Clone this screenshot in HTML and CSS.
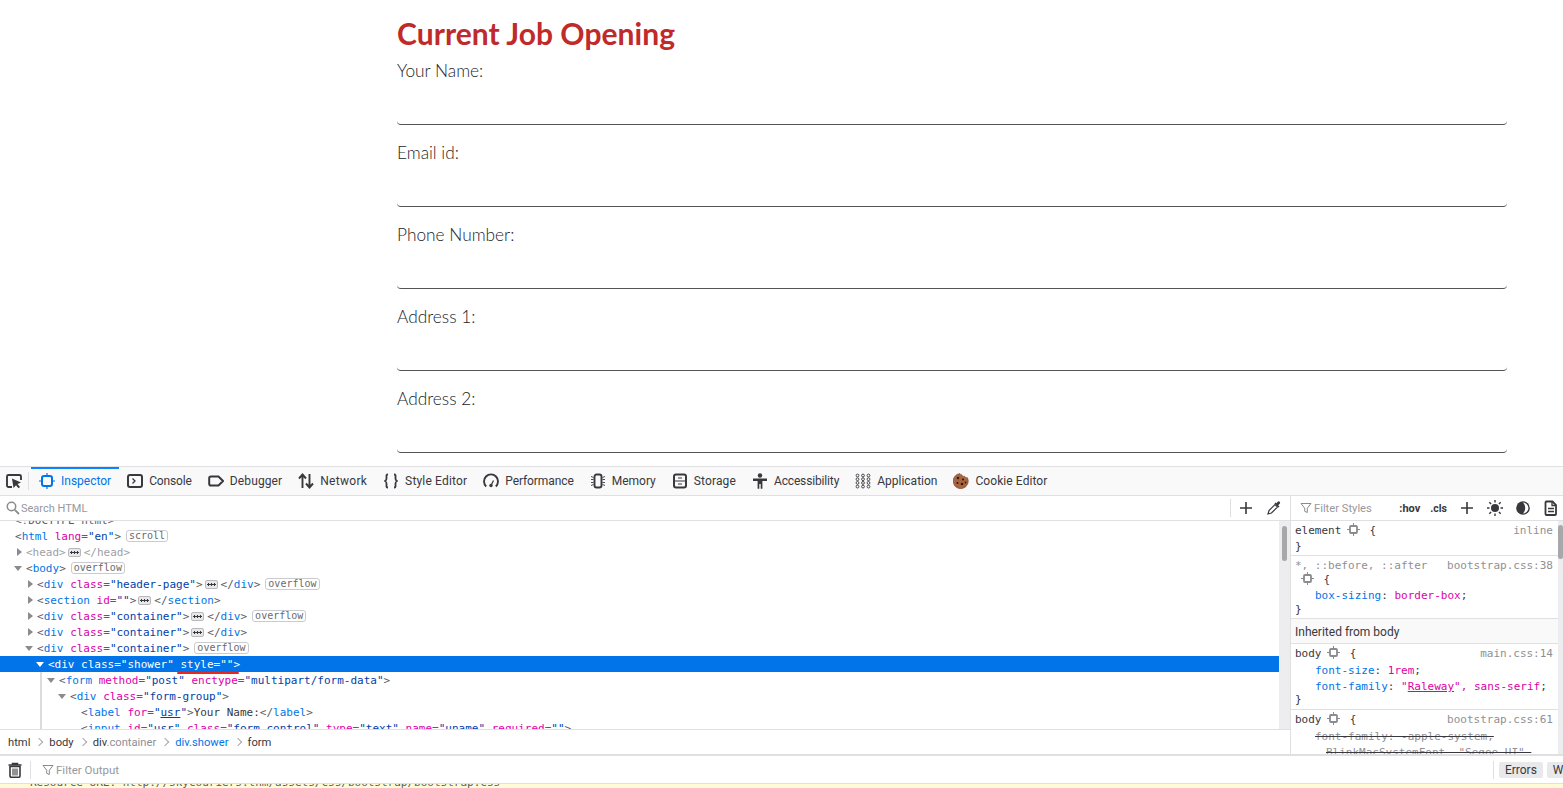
FILE: index.html
```html
<!DOCTYPE html>
<html lang="en">
<head>
<meta charset="utf-8">
<title>Current Job Opening</title>
<link rel="stylesheet" href="styles.css">
</head>
<body>
<main class="page">
  <h2 class="title">Current Job Opening</h2>
  <div class="group"><label class="lbl">Your Name:</label><div class="field"></div></div>
  <div class="group"><label class="lbl">Email id:</label><div class="field"></div></div>
  <div class="group"><label class="lbl">Phone Number:</label><div class="field"></div></div>
  <div class="group"><label class="lbl">Address 1:</label><div class="field"></div></div>
  <div class="group"><label class="lbl">Address 2:</label><div class="field"></div></div>
</main>
<section class="devtools">
  <nav class="tabs">
    <span class="pick"><svg width="16" height="16" viewBox="0 0 16 16" class="ic"><path d="M6 14H2.500A1.500 1.500 0 0 1 1 12.500v-9A1.500 1.500 0 0 1 2.500 2h11A1.500 1.500 0 0 1 15 3.500V7" fill="none" stroke="#38383d" stroke-width="1.900"/><path d="M6 5.500l9 4-3.500 1.500 2.500 3-1.500 1.300-2.500-3L7.500 15z" fill="#38383d"/></svg></span>
    <a class="tab on"><svg width="16" height="16" viewBox="0 0 16 16"><rect x="3" y="3" width="10" height="10" rx="2" fill="none" stroke="#0074e8" stroke-width="2"/><path d="M8 0v3M8 13v3M0 8h3M13 8h3" stroke="#0074e8" stroke-width="1.200"/></svg>Inspector</a>
    <a class="tab ls-con"><svg width="16" height="16" viewBox="0 0 16 16"><rect x="1" y="2" width="14" height="12" rx="2" fill="none" stroke="#38383d" stroke-width="2"/><path d="M5.500 5.500L8 8l-2.500 2.500" fill="none" stroke="#38383d" stroke-width="1.300"/></svg>Console</a>
    <a class="tab ls-dbg"><svg width="16" height="16" viewBox="0 0 16 16"><path d="M3 3.500h7.500L15 8l-4.500 4.500H3A1.800 1.800 0 0 1 1.200 10.700V5.300A1.800 1.800 0 0 1 3 3.500z" fill="none" stroke="#38383d" stroke-width="2"/></svg>Debugger</a>
    <a class="tab ls-net"><svg width="16" height="16" viewBox="0 0 16 16"><path d="M4.500 15V2M1 5.500l3.500-4 3.500 4M11.500 1v13M8 10.500l3.500 4 3.500-4" fill="none" stroke="#38383d" stroke-width="1.900"/></svg>Network</a>
    <a class="tab ls-sty"><svg width="16" height="16" viewBox="0 0 16 16"><path d="M5 1.500C3 1.500 3.500 3 3.500 5S3.500 7.500 1.500 8c2 .5 2 1 2 3s-.5 3.500 1.500 3.500M11 1.500c2 0 1.500 1.500 1.500 3.500s0 2.500 2 3c-2 .5-2 1-2 3s.5 3.500-1.500 3.500" fill="none" stroke="#38383d" stroke-width="1.800"/></svg>Style Editor</a>
    <a class="tab ls-per"><svg width="16" height="16" viewBox="0 0 16 16"><path d="M3.200 13.500a7 7 0 1 1 9.600 0" fill="none" stroke="#38383d" stroke-width="1.900"/><circle cx="8" cy="12.500" r="1.700" fill="#38383d"/><path d="M8 12.500l2.500-5" stroke="#38383d" stroke-width="1.300"/></svg>Performance</a>
    <a class="tab"><svg width="16" height="16" viewBox="0 0 16 16"><rect x="4.500" y="1.500" width="7" height="13" rx="2" fill="none" stroke="#38383d" stroke-width="1.900"/><path d="M1 3.500l2.500 1M1 6.500h2.500M1 9.500h2.500M1 12.500l2.500-1M15 3.500l-2.500 1M15 6.500h-2.500M15 9.500h-2.500M15 12.500l-2.500-1" stroke="#38383d" stroke-width=".9"/></svg>Memory</a>
    <a class="tab ls-sto"><svg width="16" height="16" viewBox="0 0 16 16"><rect x="2" y="1.500" width="12" height="13" rx="2" fill="none" stroke="#38383d" stroke-width="2"/><path d="M2 8h12M6 5h4M6 11h4" stroke="#38383d" stroke-width="1.200"/></svg>Storage</a>
    <a class="tab ls-acc"><svg width="16" height="16" viewBox="0 0 16 16"><circle cx="8" cy="2.500" r="2.200" fill="#38383d"/><path d="M1 5.500h14v2.500H10.400V15.800H8.700V11H7.300v4.800H5.600V8H1z" fill="#38383d"/></svg>Accessibility</a>
    <a class="tab"><svg width="16" height="16" viewBox="0 0 16 16" fill="none" stroke="#38383d" stroke-width=".9"><circle cx="2.500" cy="2.500" r="1.400"/><circle cx="8" cy="2.500" r="1.400"/><circle cx="13.500" cy="2.500" r="1.400"/><circle cx="2.500" cy="6.200" r="1.400"/><circle cx="8" cy="6.200" r="1.400"/><circle cx="13.500" cy="6.200" r="1.400"/><circle cx="2.500" cy="9.900" r="1.400"/><circle cx="8" cy="9.900" r="1.400"/><circle cx="13.500" cy="9.900" r="1.400"/><circle cx="2.500" cy="13.600" r="1.400"/><circle cx="8" cy="13.600" r="1.400"/><circle cx="13.500" cy="13.600" r="1.400"/></svg>Application</a>
    <a class="tab ls-coo"><svg width="16" height="16" viewBox="0 0 16 16"><path d="M7 .5c.2 1.300 1 1.500 2 1.200.1 1.300 1.300 2 2.500 1.400.3 1.300 1.500 1.700 3 1.600A7.600 7.600 0 1 1 7 .5z" fill="#a8653f" stroke="#6b4029" stroke-width=".5"/><circle cx="5" cy="5" r="1.200" fill="#2f1d12"/><circle cx="10" cy="6.500" r="1.100" fill="#2f1d12"/><circle cx="4.500" cy="10" r="1.100" fill="#2f1d12"/><circle cx="9" cy="11" r="1.300" fill="#2f1d12"/><circle cx="12.500" cy="9.500" r=".9" fill="#2f1d12"/></svg>Cookie Editor</a>
  </nav>
  <div class="panes">
    <div class="left">
      <div class="search">
        <svg class="mag" width="14" height="14" viewBox="0 0 14 14"><circle cx="5.500" cy="5.500" r="4.200" fill="none" stroke="#8a8a8f" stroke-width="1.500"/><path d="M8.800 8.800L13 13" stroke="#8a8a8f" stroke-width="1.800"/></svg>
        <span class="ph sh">Search HTML</span>
        <span class="sep"></span>
        <svg class="act" width="16" height="16" viewBox="0 0 16 16"><path d="M8 2v12M2 8h12" stroke="#38383d" stroke-width="1.600"/></svg>
        <svg class="act" width="16" height="16" viewBox="0 0 16 16"><path d="M2 14l1-3.500 6-6 2.500 2.500-6 6z" fill="none" stroke="#38383d" stroke-width="1.200"/><path d="M8.500 3.500l4 4 1-1-1.300-1.300 1.500-1.500a1.300 1.300 0 0 0-1.900-1.900l-1.500 1.500L9.500 2.500z" fill="#38383d"/></svg>
      </div>
      <div class="markup-wrap">
        <div class="markup">
          <div class="row d0"><i class="tw none"></i><b class="p">&lt;!DOCTYPE html&gt;</b></div>
          <div class="row d0"><i class="tw none"></i><b class="p">&lt;</b><b class="t">html</b> <b class="a">lang</b><b class="p">=</b><b class="v">"en"</b><b class="p">&gt;</b><span class="bdg">scroll</span></div>
          <div class="row d1 dim"><i class="tw r"></i>&lt;head&gt;<span class="more"></span>&lt;/head&gt;</div>
          <div class="row d1"><i class="tw o"></i><b class="p">&lt;</b><b class="t">body</b><b class="p">&gt;</b><span class="bdg">overflow</span></div>
          <div class="row d2"><i class="tw r"></i><b class="p">&lt;</b><b class="t">div</b> <b class="a">class</b><b class="p">=</b><b class="v">"header-page"</b><b class="p">&gt;</b><span class="more"></span><b class="p">&lt;/</b><b class="t">div</b><b class="p">&gt;</b><span class="bdg">overflow</span></div>
          <div class="row d2"><i class="tw r"></i><b class="p">&lt;</b><b class="t">section</b> <b class="a">id</b><b class="p">=</b><b class="v">""</b><b class="p">&gt;</b><span class="more"></span><b class="p">&lt;/</b><b class="t">section</b><b class="p">&gt;</b></div>
          <div class="row d2"><i class="tw r"></i><b class="p">&lt;</b><b class="t">div</b> <b class="a">class</b><b class="p">=</b><b class="v">"container"</b><b class="p">&gt;</b><span class="more"></span><b class="p">&lt;/</b><b class="t">div</b><b class="p">&gt;</b><span class="bdg">overflow</span></div>
          <div class="row d2"><i class="tw r"></i><b class="p">&lt;</b><b class="t">div</b> <b class="a">class</b><b class="p">=</b><b class="v">"container"</b><b class="p">&gt;</b><span class="more"></span><b class="p">&lt;/</b><b class="t">div</b><b class="p">&gt;</b></div>
          <div class="row d2"><i class="tw o"></i><b class="p">&lt;</b><b class="t">div</b> <b class="a">class</b><b class="p">=</b><b class="v">"container"</b><b class="p">&gt;</b><span class="bdg">overflow</span></div>
          <div class="row d3 sel"><i class="tw o"></i>&lt;div class="shower" style=""&gt;</div>
          <div class="guide">
            <div class="row d4"><i class="tw o"></i><b class="p">&lt;</b><b class="t">form</b> <b class="a">method</b><b class="p">=</b><b class="v">"post"</b> <b class="a">enctype</b><b class="p">=</b><b class="v">"multipart/form-data"</b><b class="p">&gt;</b></div>
            <div class="row d5"><i class="tw o"></i><b class="p">&lt;</b><b class="t">div</b> <b class="a">class</b><b class="p">=</b><b class="v">"form-group"</b><b class="p">&gt;</b></div>
            <div class="row d6"><i class="tw none"></i><b class="p">&lt;</b><b class="t">label</b> <b class="a">for</b><b class="p">=</b><b class="v">"<u>usr</u>"</b><b class="p">&gt;</b>Your Name:<b class="p">&lt;/</b><b class="t">label</b><b class="p">&gt;</b></div>
            <div class="row d6"><i class="tw none"></i><b class="p">&lt;</b><b class="t">input</b> <b class="a">id</b><b class="p">=</b><b class="v">"usr"</b> <b class="a">class</b><b class="p">=</b><b class="v">"form-control"</b> <b class="a">type</b><b class="p">=</b><b class="v">"text"</b> <b class="a">name</b><b class="p">=</b><b class="v">"uname"</b> <b class="a">required</b><b class="p">=</b><b class="v">""</b><b class="p">&gt;</b></div>
          </div>
        </div>
        <div class="vbar"><span class="thumb t1"></span></div>
      </div>
      <div class="crumbs">
        <span>html</span><i class="chev"></i><span>body</span><i class="chev"></i><span>div<em>.container</em></span><i class="chev"></i><span class="cur">div.shower</span><i class="chev"></i><span>form</span>
      </div>
    </div>
    <aside class="right">
      <div class="filter">
        <svg width="12" height="12" viewBox="0 0 12 12"><path d="M1 1.500h10L7.300 6.200v4.300l-2.600-1.200V6.200z" fill="none" stroke="#8a8a8f" stroke-width="1"/></svg>
        <span class="ph fs">Filter Styles</span>
        <b class="hov">:hov</b><b class="cls">.cls</b>
        <svg class="rb" width="16" height="16" viewBox="0 0 16 16"><path d="M8 2v12M2 8h12" stroke="#38383d" stroke-width="1.600"/></svg>
        <svg class="rb" width="16" height="16" viewBox="0 0 16 16"><circle cx="8" cy="8" r="4" fill="#38383d"/><path d="M8 0v2.500M8 13.500V16M0 8h2.500M13.500 8H16M2.300 2.300l1.800 1.800M11.900 11.900l1.800 1.800M13.700 2.300l-1.800 1.800M4.100 11.900l-1.800 1.800" stroke="#38383d" stroke-width="1.400"/></svg>
        <svg class="rb" width="16" height="16" viewBox="0 0 16 16"><circle cx="8" cy="8" r="6.800" fill="#38383d"/><path d="M8 2.600a5.400 5.400 0 0 1 0 10.800c1.500-1.600 2.200-3.400 2.200-5.400S9.500 4.200 8 2.600z" fill="#fff"/></svg>
        <svg class="rb" width="16" height="16" viewBox="0 0 16 16"><path d="M3.500 1.500h6l3.500 3.500v9a1 1 0 0 1-1 1H3.500a1 1 0 0 1-1-1v-11.500a1 1 0 0 1 1-1z" fill="none" stroke="#38383d" stroke-width="1.800"/><path d="M9 1.500V5.500h4M5 8.500h6M5 11.500h6" fill="none" stroke="#38383d" stroke-width="1.300"/></svg>
      </div>
      <div class="rules-wrap">
        <div class="rules">
          <div class="rule r1">
            <div class="sl"><span>element <svg class="gear" width="13" height="13" viewBox="0 0 13 13"><use href="#chip"/></svg> {</span><span class="src">inline</span></div>
            <div class="ln">}</div>
          </div>
          <div class="rule r2">
            <div class="sl"><span class="gr">*, ::before, ::after</span><span class="src">bootstrap.css:38</span></div>
            <div class="ln ind1"><svg class="gear" width="13" height="13" viewBox="0 0 13 13"><use href="#chip"/></svg> {</div>
            <div class="ln ind"><span class="k">box-sizing</span>: <span class="m">border-box</span>;</div>
            <div class="ln">}</div>
          </div>
          <div class="inh">Inherited from body</div>
          <div class="rule r3">
            <div class="sl"><span>body <svg class="gear" width="13" height="13" viewBox="0 0 13 13"><use href="#chip"/></svg> {</span><span class="src">main.css:14</span></div>
            <div class="ln ind"><span class="k">font-size</span>: <span class="m">1rem</span>;</div>
            <div class="ln ind"><span class="k">font-family</span>: <span class="m">"<u>Raleway</u>", sans-serif</span>;</div>
            <div class="ln">}</div>
          </div>
          <div class="rule r4">
            <div class="sl"><span>body <svg class="gear" width="13" height="13" viewBox="0 0 13 13"><use href="#chip"/></svg> {</span><span class="src">bootstrap.css:61</span></div>
            <div class="ln ind strike">font-family: -apple-system,</div>
            <div class="ln ind2 strike">BlinkMacSystemFont, "Segoe UI",</div>
          </div>
        </div>
        <div class="vbar thin"><span class="thumb t2"></span></div>
      </div>
    </aside>
  </div>
  <div class="conbar">
    <svg width="14" height="16" viewBox="0 0 14 16"><path d="M4.500 2.500V1.500h5v1M.5 3h13" fill="none" stroke="#38383d" stroke-width="1.500"/><path d="M2 4.500h10V14a1.300 1.300 0 0 1-1.300 1.300H3.300A1.300 1.300 0 0 1 2 14z" fill="none" stroke="#38383d" stroke-width="1.600"/><path d="M5 6.500v7M7 6.500v7M9 6.500v7" stroke="#38383d" stroke-width="1.100"/></svg>
    <span class="sep2"></span>
    <svg width="12" height="12" viewBox="0 0 12 12"><path d="M1 1.500h10L7.300 6.200v4.300l-2.600-1.200V6.200z" fill="none" stroke="#8a8a8f" stroke-width="1"/></svg>
    <span class="ph fo">Filter Output</span>
    <span class="sep3"></span>
    <span class="btn">Errors</span><span class="btn wa">Warnings</span>
  </div>
  <div class="msg"><span>Resource URL: http://skycouriers.thm/assets/css/bootstrap/bootstrap.css</span></div>
</section>
<svg class="defs" width="0" height="0"><symbol id="chip" viewBox="0 0 13 13"><rect x="3" y="3" width="7" height="7" rx="1" fill="none" stroke="#8a8a8f" stroke-width="1.800"/><path d="M6.500 0v3M6.500 10v3M0 6.500h3M10 6.500h3" stroke="#8a8a8f" stroke-width="1"/></symbol></svg>
</body>
</html>
```
FILE: styles.css
```css
* { box-sizing: border-box; }
html, body { margin: 0; height: 100%; overflow: hidden; }
body { width: 1563px; height: 788px; display: flex; flex-direction: column; background: #fff; }
.defs { position: absolute; }

.page { height: 466px; padding: 15px 56px 0 397px; overflow: hidden; font-family: Lato, sans-serif; }
.title { margin: 0 0 8px; font-size: 30px; line-height: 36px; font-weight: 700; color: #c02a2a; letter-spacing: .05px; }
.group { margin-bottom: 16px; }
.lbl { display: block; height: 24px; line-height: 24px; font-size: 17.300px; font-weight: 300; color: #212529; }
.field { height: 42px; border-bottom: 1px solid #555; border-radius: 0 0 4px 4px; }

.devtools { flex: 1; min-height: 0; display: flex; flex-direction: column; overflow: hidden; font-family: Roboto, sans-serif; font-size: 12px; color: #38383d; }
.tabs { height: 30px; flex: none; display: flex; align-items: stretch; background: #f9f9fa; border-top: 1px solid #e0e0e2; border-bottom: 1px solid #e0e0e2; }
.pick { width: 31px; padding-left: 6px; display: flex; align-items: center; position: relative; }
.pick::after { content: ""; position: absolute; right: 2px; top: 5px; bottom: 5px; width: 1px; background: #e0e0e2; }
.tab { display: flex; align-items: center; gap: 6px; padding: 0 8px 2px; border-top: 2px solid transparent; white-space: nowrap; }
.tab svg { flex: none; }
.tab.on { border-top-color: #0a84ff; color: #0074e8; }
.ls-con { letter-spacing: -.14px; }
.ls-dbg { letter-spacing: .12px; }
.ls-net { letter-spacing: .28px; }
.ls-sty { letter-spacing: .17px; }
.ls-per { letter-spacing: -.09px; }
.ls-sto { letter-spacing: .14px; }
.ls-acc { letter-spacing: -.15px; }
.ls-coo { letter-spacing: .08px; }

.panes { flex: none; height: 259px; display: flex; border-bottom: 1px solid #e0e0e2; }
.left { width: 1290px; display: flex; flex-direction: column; }
.search { height: 25px; flex: none; display: flex; align-items: center; padding: 0 8px 0 6px; border-bottom: 1px solid #e0e0e2; }
.mag { margin-right: 1px; }
.ph { color: #98989d; font-size: 11.500px; }
.sh { font-size: 11px; }
.sep { margin-left: auto; width: 1px; height: 18px; background: #e0e0e2; margin-right: 7px; }
.act { margin-right: 12px; }
.act:last-child { margin-right: 0; }

.markup-wrap { flex: 1; min-height: 0; display: flex; overflow: hidden; }
.markup { flex: 1; margin-top: -9px; font: 11px/16px "DejaVu Sans Mono", monospace; color: #38383d; }
.row { height: 16px; line-height: 18px; white-space: pre; }
.row b { font-weight: 400; }
.row .p { color: #5c5c61; }
.row .t { color: #0074e8; }
.row .a { color: #dd00a9; }
.row .v { color: #003eaa; }
.row u { text-decoration-color: #003eaa; }
.dim { color: #a0a0a5; }
.tw { width: 11px; height: 16px; position: relative; display: inline-block; vertical-align: top; }
.tw.r::before { content: ""; position: absolute; left: 2px; top: 4px; border-left: 5px solid #8a8a8f; border-top: 4px solid transparent; border-bottom: 4px solid transparent; }
.tw.o::before { content: ""; position: absolute; left: -1px; top: 6px; border-top: 5px solid #8a8a8f; border-left: 4px solid transparent; border-right: 4px solid transparent; }
.d0 { padding-left: 4px; }
.d1 { padding-left: 15px; }
.d2 { padding-left: 26px; }
.d3 { padding-left: 37px; }
.d4 { padding-left: 6px; }
.d5 { padding-left: 17px; }
.d6 { padding-left: 28px; }
.sel { background: #0074e8; color: #fff; position: relative; }
.sel .tw.o::before { border-top-color: #fff; }
.sel::after { content: ""; position: absolute; left: 177px; width: 62px; top: 16px; height: 2px; border-radius: 1px; background: #e8281e; }
.guide { margin-left: 40px; border-left: 2px solid #dcdce0; }
.bdg { display: inline-block; vertical-align: 1px; margin-left: 5px; height: 12px; padding: 0 2px; border: 1px solid #cacad1; border-radius: 3px; font-size: 10px; line-height: 10px; color: #6a6a6f; }
.more { --dot: radial-gradient(circle, #38383d 0 1px, transparent 1.300px); display: inline-block; vertical-align: -1px; margin: 0 3px 0 2px; width: 13px; height: 9px; background: var(--dot) 1px 50%/3px 3px no-repeat, var(--dot) 4px 50%/3px 3px no-repeat, var(--dot) 7px 50%/3px 3px no-repeat, #e8e8ea; border: 1px solid #b8b8bd; border-radius: 2px; }

.vbar { flex: none; width: 11px; background: #ededf0; padding: 5px 3px 0; }
.vbar.thin { width: 5px; padding: 4px 0 0; }
.thumb { display: block; background: #a8a8ab; border-radius: 3px; }
.t1 { height: 35px; }
.t2 { height: 34px; }

.crumbs { height: 25px; flex: none; display: flex; align-items: center; padding-left: 8px; border-top: 1px solid #e0e0e2; font-size: 11.200px; }
.crumbs em { font-style: normal; color: #8f8f94; }
.crumbs .cur { color: #0074e8; }
.chev { width: 19px; height: 16px; position: relative; display: block; }
.chev::before { content: ""; position: absolute; left: 6px; top: 5px; width: 5px; height: 5px; border-top: 1px solid #a8a8ab; border-right: 1px solid #a8a8ab; transform: rotate(45deg); }

.right { flex: 1; min-width: 0; border-left: 1px solid #e0e0e2; display: flex; flex-direction: column; }
.filter { height: 25px; flex: none; display: flex; align-items: center; padding: 0 4px 0 9px; border-bottom: 1px solid #e0e0e2; }
.fs { margin-left: 2px; font-size: 11.200px; }
.hov { margin-left: auto; font-weight: 700; font-size: 11px; }
.cls { margin-left: 10px; font-weight: 700; font-size: 10.500px; }
.rb { margin-left: 12px; }
.rules-wrap { flex: 1; min-height: 0; display: flex; overflow: hidden; }
.rules { flex: 1; min-width: 0; font: 11px/16px "DejaVu Sans Mono", monospace; padding-top: 1px; }
.rule { padding: 0 5px 0 4px; border-bottom: 1px solid #e0e0e2; }
.r1 { height: 34px; line-height: 18px; }
.r2 { height: 63px; }
.r3 { height: 66px; }
.r4 { border-bottom: 0; }
.sl { display: flex; justify-content: space-between; height: 16px; }
.r2 .sl, .r3 .sl, .r4 .sl { line-height: 20px; }
.r2 .ln { height: 15px; line-height: 15px; }
.r2 .ind { line-height: 17px; }
.r3 .ind, .r4 .ind, .r4 .ind2 { line-height: 22px; }
.src, .gr { color: #8f8f94; }
.ln { height: 16px; }
.ind { padding-left: 20px; }
.ind1 { padding-left: 7px; }
.ind2 { padding-left: 31px; }
.k { color: #0074e8; }
.m { color: #dd00a9; }
.gear { vertical-align: -2px; margin: 0 3px 0 -1px; }
.strike { color: #8f8f94; text-decoration: line-through; text-decoration-color: #38383d; }
.inh { height: 25px; padding-left: 4px; font: 12px/27px Roboto, sans-serif; background: #f9f9fa; border-bottom: 1px solid #e0e0e2; }

.conbar { height: 29px; flex: none; display: flex; align-items: center; padding-left: 8px; border-bottom: 1px solid #e0e0e2; background: #fff; border-top: 1px solid #e0e0e2; }
.sep2 { width: 1px; height: 18px; background: #e0e0e2; margin: 0 11px 0 8px; }
.fo { margin-left: 2px; }
.sep3 { margin-left: auto; width: 1px; height: 18px; background: #e0e0e2; margin-right: 5px; }
.btn { height: 16px; padding: 0 6px; line-height: 16px; background: #e9e9eb; border-radius: 2px; margin-right: 4px; }
.wa { margin-right: -46px; }
.msg { flex: 1; min-height: 0; overflow: hidden; background: #fffbd6; font: 11px/16px "DejaVu Sans Mono", monospace; padding-left: 30px; color: #5c5c61; }
.msg span { display: block; margin-top: -9px; white-space: pre; }
```
